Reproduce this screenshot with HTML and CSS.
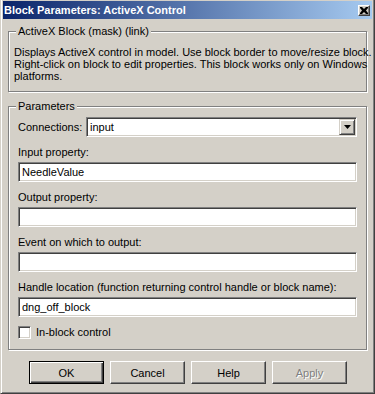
FILE: index.html
```html
<!DOCTYPE html>
<html lang="en">
<head>
    <meta charset="UTF-8">
    <meta name="viewport" content="width=device-width, initial-scale=1.0">
    <link rel="stylesheet" href="styles.css">
    <title>Block Parameters: ActiveX Control</title>
</head>
<body>

    <div class="window">
        <div class="titlebar">
            <span class="title">Block Parameters: ActiveX Control</span>
            <span class="close-btn">
                <svg width="8" height="7" viewBox="0 0 8 7">
                    <path d="M0 0h2l2 2 2-2h2v1l-2 2.5 2 2.5v1h-2l-2-2-2 2h-2v-1l2-2.5-2-2.5z" fill="#000"/>
                </svg>
            </span>
        </div>

        <div class="content">
            <div class="group group-desc">
                <span class="legend">ActiveX Block (mask) (link)</span>
                <p class="desc">Displays ActiveX control in model. Use block border to move/resize block.<br>Right-click on block to edit properties. This block works only on Windows<br>platforms.</p>
            </div>

            <div class="group group-params">
                <span class="legend">Parameters</span>

                <div class="conn-row">
                    <label class="conn-label">Connections:</label>
                    <div class="select">
                        <span class="select-value">input</span>
                        <span class="drop-btn">
                            <svg width="7" height="4" viewBox="0 0 7 4"><path d="M0 0h7l-3.5 4z" fill="#000"/></svg>
                        </span>
                    </div>
                </div>

                <div class="field">
                    <label>Input property:</label>
                    <div class="textbox">NeedleValue</div>
                </div>
                <div class="field">
                    <label>Output property:</label>
                    <div class="textbox"></div>
                </div>
                <div class="field">
                    <label>Event on which to output:</label>
                    <div class="textbox"></div>
                </div>
                <div class="field">
                    <label>Handle location (function returning control handle or block name):</label>
                    <div class="textbox">dng_off_block</div>
                </div>

                <div class="check-row">
                    <span class="checkbox"></span>
                    <span>In-block control</span>
                </div>
            </div>

            <div class="buttons">
                <button type="button" class="btn btn-default">OK</button>
                <button type="button" class="btn">Cancel</button>
                <button type="button" class="btn">Help</button>
                <button type="button" class="btn btn-disabled">Apply</button>
            </div>
        </div>
    </div>

</body>
</html>
```

FILE: styles.css
```css
html, body {
    margin: 0;
    padding: 0;
    background-color: #d4d0c8;
    overflow: hidden;
}

body {
    font-family: 'Liberation Sans', Arial, sans-serif;
    font-size: 11px;
    color: #000;
}

.window {
    width: 375px;
    height: 394px;
    box-sizing: border-box;
    border-left: 1px solid #d4d0c8;
    border-right: 1px solid #404040;
    border-bottom: 1px solid #404040;
    box-shadow: inset 1px 0 #fff, inset -1px -1px #808080;
    padding: 1px 2px 0 2px;
}

.titlebar {
    height: 18px;
    display: flex;
    align-items: center;
    justify-content: space-between;
    background: linear-gradient(to right, #0a246a, #a6caf0);
    padding: 0 2px 0 1px;
}

.title {
    color: #fff;
    font-weight: bold;
    font-size: 11px;
    white-space: nowrap;
}

.close-btn {
    width: 12px;
    height: 11px;
    box-sizing: border-box;
    display: flex;
    align-items: center;
    justify-content: center;
    background-color: #d4d0c8;
    border-top: 1px solid #fff;
    border-left: 1px solid #fff;
    border-right: 1px solid #404040;
    border-bottom: 1px solid #404040;
    box-shadow: inset -1px -1px #808080;
}

.content {
    padding: 0 5px;
}

.group {
    position: relative;
    border: 1px solid #808080;
    box-shadow: inset 1px 1px #fff, 1px 1px #fff;
}

.legend {
    position: absolute;
    top: -7px;
    left: 7px;
    padding: 0 2px;
    line-height: 13px;
    background-color: #d4d0c8;
    white-space: nowrap;
}

.group-desc {
    margin-top: 12px;
    height: 61px;
    box-sizing: border-box;
    padding: 14px 3px 0 5px;
}

.desc {
    margin: 0;
    line-height: 12px;
    white-space: nowrap;
}

.group-params {
    margin-top: 14px;
    padding: 10px 9px 10px 9px;
}

.conn-row {
    display: flex;
    align-items: center;
}

.conn-label {
    width: 68px;
}

.select, .textbox {
    height: 20px;
    box-sizing: border-box;
    background-color: #fff;
    border-top: 1px solid #808080;
    border-left: 1px solid #808080;
    border-right: 1px solid #fff;
    border-bottom: 1px solid #fff;
    box-shadow: inset 1px 1px #404040, inset -1px -1px #d4d0c8;
}

.select {
    flex: 1;
    display: flex;
    align-items: center;
    justify-content: space-between;
    padding: 1px 1px 1px 3px;
}

.drop-btn {
    width: 16px;
    height: 16px;
    box-sizing: border-box;
    display: flex;
    align-items: center;
    justify-content: center;
    background-color: #d4d0c8;
    border-top: 1px solid #d4d0c8;
    border-left: 1px solid #d4d0c8;
    border-right: 1px solid #404040;
    border-bottom: 1px solid #404040;
    box-shadow: inset 1px 1px #fff, inset -1px -1px #808080;
}

.field label {
    display: block;
    margin-top: 8px;
    margin-bottom: 3px;
    line-height: 14px;
    white-space: nowrap;
}

.textbox {
    display: flex;
    align-items: center;
    padding: 0 3px;
}

.check-row {
    display: flex;
    align-items: center;
    gap: 5px;
    margin-top: 9px;
    line-height: 13px;
}

.checkbox {
    width: 13px;
    height: 13px;
    box-sizing: border-box;
    background-color: #fff;
    border-top: 1px solid #808080;
    border-left: 1px solid #808080;
    border-right: 1px solid #fff;
    border-bottom: 1px solid #fff;
    box-shadow: inset 1px 1px #404040, inset -1px -1px #d4d0c8;
}

.buttons {
    display: flex;
    gap: 6px;
    margin-top: 11px;
    padding-left: 21px;
}

.btn {
    width: 75px;
    height: 23px;
    box-sizing: border-box;
    margin: 0;
    padding: 0;
    font-family: 'Liberation Sans', Arial, sans-serif;
    font-size: 11px;
    color: #000;
    background-color: #d4d0c8;
    border-top: 1px solid #fff;
    border-left: 1px solid #fff;
    border-right: 1px solid #404040;
    border-bottom: 1px solid #404040;
    box-shadow: inset -1px -1px #808080;
    border-radius: 0;
}

.btn-default {
    border: 1px solid #000;
    box-shadow: inset 1px 1px #fff, inset -1px -1px #404040, inset -2px -2px #808080;
}

.btn-disabled {
    color: #808080;
    text-shadow: 1px 1px #fff;
}
```
